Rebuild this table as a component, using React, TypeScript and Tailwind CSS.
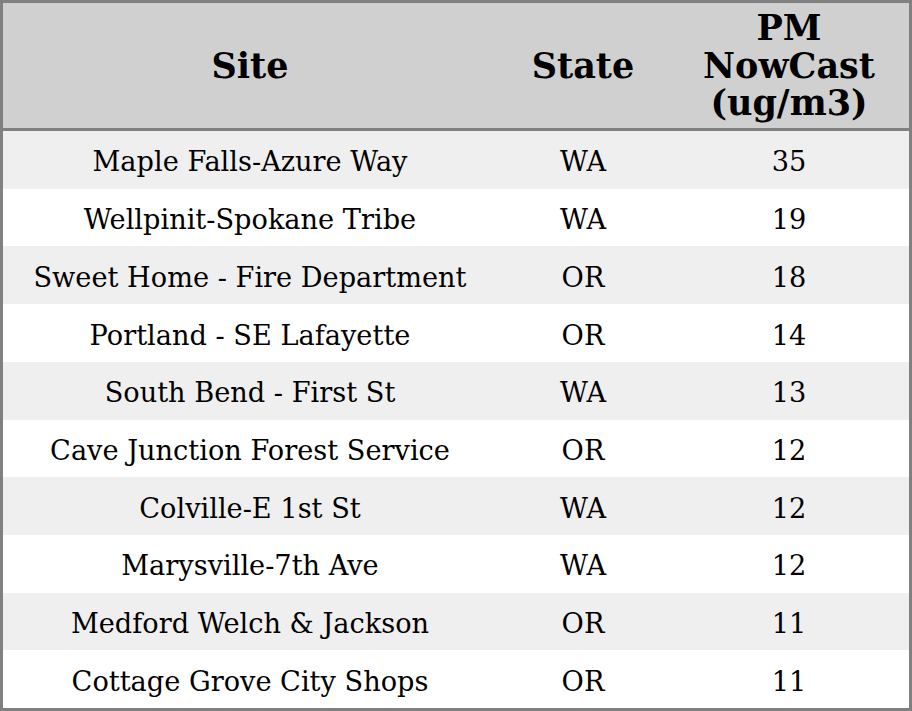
const rows = [
  { site: 'Maple Falls-Azure Way', state: 'WA', pm: 35 },
  { site: 'Wellpinit-Spokane Tribe', state: 'WA', pm: 19 },
  { site: 'Sweet Home - Fire Department', state: 'OR', pm: 18 },
  { site: 'Portland - SE Lafayette', state: 'OR', pm: 14 },
  { site: 'South Bend - First St', state: 'WA', pm: 13 },
  { site: 'Cave Junction Forest Service', state: 'OR', pm: 12 },
  { site: 'Colville-E 1st St', state: 'WA', pm: 12 },
  { site: 'Marysville-7th Ave', state: 'WA', pm: 12 },
  { site: 'Medford Welch & Jackson', state: 'OR', pm: 11 },
  { site: 'Cottage Grove City Shops', state: 'OR', pm: 11 }
]

export default function App() {
  return (
    <div className="w-[912px] h-[711px] bg-white font-['DejaVu_Serif',serif] text-black">
      <div className="border-[3px] border-[#808080] h-full flex flex-col">
        <div className="grid grid-cols-[494px_172px_1fr] h-[128px] bg-[#d0d0d0] border-b-[3px] border-[#808080] text-[35px] font-bold leading-[37.5px]">
          <div className="flex items-center justify-center">Site</div>
          <div className="flex items-center justify-center">State</div>
          <div className="flex items-center justify-center text-center">
            PM<br />NowCast<br />(ug/m3)
          </div>
        </div>
        <div className="flex-1 flex flex-col">
          {rows.map((row, i) => (
            <div
              key={row.site}
              className={`flex-1 grid grid-cols-[494px_172px_1fr] items-center pt-[6px] text-[27.2px] ${i % 2 === 0 ? 'bg-[#efefef]' : 'bg-white'}`}
            >
              <div className="text-center">{row.site}</div>
              <div className="text-center">{row.state}</div>
              <div className="text-center">{row.pm}</div>
            </div>
          ))}
        </div>
      </div>
    </div>
  )
}
